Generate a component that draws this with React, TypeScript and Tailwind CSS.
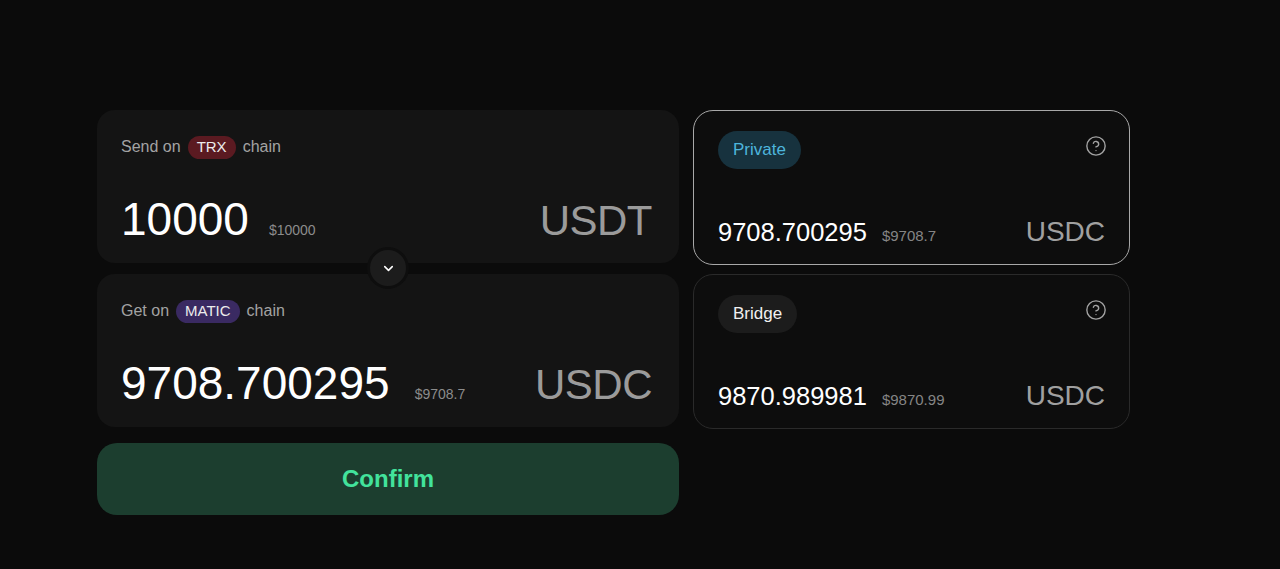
import { ChevronDown, CircleHelp } from 'lucide-react';

const font = { fontFamily: '"Liberation Sans", Arial, sans-serif' };

function ChainLabel({ verb, chain, pill }: { verb: string; chain: string; pill: string }) {
  return (
    <div className="flex items-center h-6 mt-px text-[16px] text-[#a3a3a3]">
      <span>{verb} on</span>
      <span className={`mx-[7px] px-[9px] h-[23px] flex items-center rounded-full text-[15px] text-[#ececec] ${pill}`}>
        {chain}
      </span>
      <span>chain</span>
    </div>
  );
}

function AmountCard({
  verb,
  chain,
  pill,
  amount,
  usd,
  token,
  usdGap,
}: {
  verb: string;
  chain: string;
  pill: string;
  amount: string;
  usd: string;
  token: string;
  usdGap: string;
}) {
  return (
    <div className="h-[153px] rounded-[18px] bg-[#141414] pl-6 pr-[27px] pt-6 pb-[21px] flex flex-col justify-between">
      <ChainLabel verb={verb} chain={chain} pill={pill} />
      <div className="flex items-baseline">
        <span className="text-[46px] leading-none text-white">{amount}</span>
        <span className={`text-[14px] text-[#8c8c8c] ${usdGap}`}>{usd}</span>
        <span className="ml-auto text-[42px] leading-none text-[#9b9b9b] tracking-[-0.5px]">{token}</span>
      </div>
    </div>
  );
}

function RouteCard({
  label,
  pill,
  amount,
  usd,
  active,
}: {
  label: string;
  pill: string;
  amount: string;
  usd: string;
  active?: boolean;
}) {
  return (
    <div
      className={`h-[155px] rounded-[20px] bg-[#0d0d0d] pl-6 pr-[24px] pt-5 pb-[17px] flex flex-col justify-between border ${
        active ? 'border-[#a8a8a8] border-[1.5px]' : 'border-[#2a2a2a]'
      }`}
    >
      <div className="flex items-start justify-between">
        <span className={`h-[38px] px-[15px] flex items-center rounded-full text-[17px] ${pill}`}>{label}</span>
        <CircleHelp size={22} strokeWidth={1.5} className="mt-[4px] -mr-[2px] text-[#a3a3a3]" />
      </div>
      <div className="flex items-baseline">
        <span className="text-[25.5px] leading-none text-white">{amount}</span>
        <span className="ml-[15px] text-[15px] text-[#858585]">{usd}</span>
        <span className="ml-auto text-[28px] leading-none text-[#a0a0a0]">USDC</span>
      </div>
    </div>
  );
}

export default function App() {
  return (
    <div className="min-h-screen bg-[#0b0b0b] pt-[110px] pl-[97px]" style={font}>
      <div className="flex gap-[14px] items-start">
        {/* swap form */}
        <div className="w-[582px] flex flex-col">
          <div className="relative flex flex-col gap-[11px]">
            <AmountCard
              verb="Send"
              chain="TRX"
              pill="bg-[#5b1a21]"
              amount="10000"
              usd="$10000"
              token="USDT"
              usdGap="ml-5"
            />
            <AmountCard
              verb="Get"
              chain="MATIC"
              pill="bg-[#3a2a62]"
              amount="9708.700295"
              usd="$9708.7"
              token="USDC"
              usdGap="ml-[25px]"
            />
            <button className="absolute left-1/2 top-[137px] -translate-x-1/2 w-[42px] h-[42px] rounded-full bg-[#1c1c1c] border-[3px] border-[#0e0e0e] flex items-center justify-center text-white">
              <ChevronDown size={15} strokeWidth={2.5} />
            </button>
          </div>
          <button className="mt-4 h-[72px] rounded-[20px] bg-[#1c3e2f] text-[24px] font-bold text-[#42e39c]">
            Confirm
          </button>
        </div>

        {/* route options */}
        <div className="w-[437px] flex flex-col gap-[9px]">
          <RouteCard
            label="Private"
            pill="bg-[#17323e] text-[#4db5dc]"
            amount="9708.700295"
            usd="$9708.7"
            active
          />
          <RouteCard
            label="Bridge"
            pill="bg-[#1c1c1c] text-[#f0f0f0]"
            amount="9870.989981"
            usd="$9870.99"
          />
        </div>
      </div>
    </div>
  );
}
